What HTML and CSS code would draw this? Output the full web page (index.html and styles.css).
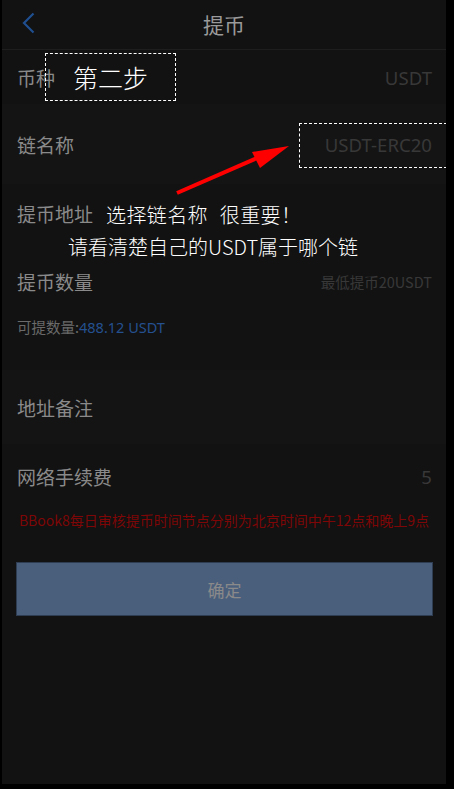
FILE: index.html
```html
<!DOCTYPE html>
<html lang="zh-CN">
<head>
<meta charset="utf-8">
<title>提币</title>
<link rel="stylesheet" href="styles.css">
</head>
<body>
<div class="frame">
  <header class="topbar">
    <svg class="back" width="14" height="22" viewBox="0 0 14 22"><polyline points="11.5,1.5 2,11 11.5,20.5" fill="none" stroke="#1f4f8f" stroke-width="2.2"/></svg>
    <h1 class="title">提币</h1>
  </header>
  <div class="row r1"><span class="label">币种</span><span class="value">USDT</span></div>
  <div class="row r2 band"><span class="label">链名称</span><span class="value">USDT-ERC20</span></div>
  <div class="row r3"><span class="label">提币地址</span></div>
  <div class="row r4"><span class="label">提币数量</span><span class="value small">最低提币20USDT</span></div>
  <div class="avail"><span class="avail-label">可提数量:</span><span class="avail-num">488.12 USDT</span></div>
  <div class="row r5 band"><span class="label">地址备注</span></div>
  <div class="row r6"><span class="label">网络手续费</span><span class="value">5</span></div>
  <p class="notice">BBook8每日审核提币时间节点分别为北京时间中午12点和晚上9点</p>
  <div class="btn-wrap"><button class="btn">确定</button></div>

  <div class="note-box step">第二步</div>
  <div class="note-box chain"></div>
  <svg class="arrow" width="444" height="784" viewBox="0 0 444 784">
    <line x1="175" y1="193" x2="262" y2="155" stroke="#ff0000" stroke-width="4"/>
    <polygon points="287,146 250,152 258,168" fill="#ff0000"/>
  </svg>
  <div class="note-text line1">选择链名称 很重要！</div>
  <div class="note-text line2">请看清楚自己的USDT属于哪个链</div>
</div>
</body>
</html>
```
FILE: styles.css
```css
html, body {
  margin: 0;
  padding: 0;
  background: #000;
}
body {
  width: 454px;
  height: 789px;
  padding-left: 2px;
  box-sizing: border-box;
  font-family: "Noto Sans", "Noto Sans CJK SC", sans-serif;
}
.frame {
  position: relative;
  width: 444px;
  height: 784px;
  background: #121212;
  overflow: hidden;
}
.topbar {
  height: 49px;
  border-bottom: 1px solid #1e1e1e;
  display: flex;
  align-items: center;
  justify-content: center;
  position: relative;
}
.back {
  position: absolute;
  left: 20px;
  top: 12px;
}
.title {
  margin: 0;
  font-family: "Noto Sans CJK SC", sans-serif;
  font-weight: 400;
  font-size: 21px;
  color: #9a9a9a;
  line-height: 1;
}
.row {
  display: flex;
  align-items: center;
  justify-content: space-between;
  padding: 0 14px 0 15px;
}
.band { background: #141414; }
.r1 { height: 54px; }
.r2 { height: 80px; }
.r3 { height: 58px; }
.r4 { height: 78px; }
.r5 { height: 74px; }
.r6 { height: 64px; }
.label {
  font-family: "Noto Sans CJK SC", sans-serif;
  font-size: 19px;
  color: #8a8a8a;
}
.value {
  font-family: "Noto Sans", "Noto Sans CJK SC", sans-serif;
  font-size: 18.6px;
  color: #383838;
}
.value.small {
  font-family: "Noto Sans CJK SC", sans-serif;
  font-size: 14.5px;
}
.avail {
  height: 50px;
  padding: 0 15px;
  font-size: 14.5px;
  line-height: 14px;
  font-family: "Noto Sans CJK SC", sans-serif;
}
.avail-label { color: #6a6a6a; }
.avail-num { color: #24508f; font-family: "Noto Sans", sans-serif; }
.notice {
  margin: 0;
  height: 24px;
  line-height: 24px;
  text-align: center;
  font-family: "Noto Sans CJK SC", sans-serif;
  font-size: 14px;
  color: #7e0606;
  letter-spacing: 0;
}
.btn-wrap {
  padding: 30px 13px 0 14px;
}
.btn {
  display: block;
  width: 100%;
  height: 54px;
  background: #4a5f7c;
  border: 1px solid #2e3d52;
  color: #8a8a8a;
  font-family: "Noto Sans CJK SC", sans-serif;
  font-size: 17px;
  padding: 0;
}
.note-box {
  position: absolute;
  border: 1px dashed #ffffff;
  box-sizing: border-box;
}
.step {
  left: 43px;
  top: 53px;
  width: 131px;
  height: 48px;
  display: flex;
  align-items: center;
  justify-content: center;
  color: #fff;
  font-family: "Noto Sans CJK SC", serif;
  font-size: 25px;
  font-weight: 300;
}
.chain {
  left: 297px;
  top: 123px;
  width: 148px;
  height: 45px;
}
.arrow {
  position: absolute;
  left: 0;
  top: 0;
}
.note-text {
  position: absolute;
  color: #fff;
  font-family: "Noto Sans CJK SC", serif;
  font-weight: 300;
  font-size: 20px;
  line-height: 24px;
  white-space: nowrap;
}
.line1 { left: 104px; top: 203px; word-spacing: 7px; letter-spacing: 0.4px; }
.line2 { left: 66px; top: 235px; }
```
